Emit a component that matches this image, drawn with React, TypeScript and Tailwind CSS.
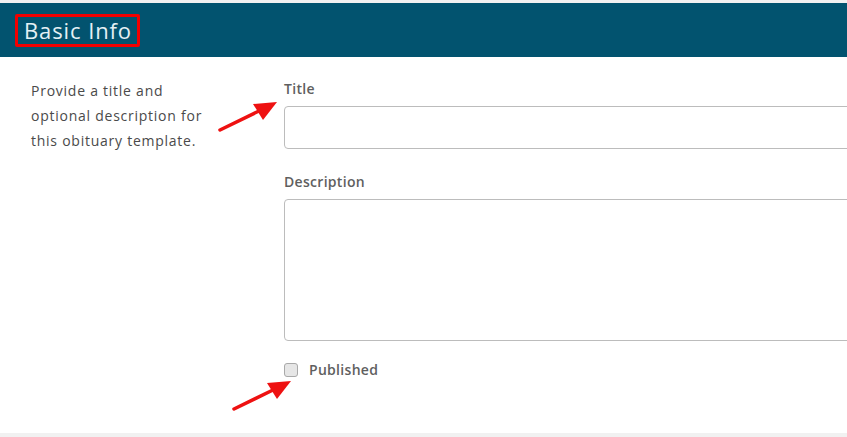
import React from 'react';

// Annotation arrow drawn over the form (screenshot markup)
const Arrow: React.FC<{ className: string }> = ({ className }) => (
  <svg className={className} width="64" height="36" viewBox="0 0 64 36" fill="none">
    <line x1="3" y1="32" x2="44" y2="12" stroke="#ee1111" strokeWidth="3.5" strokeLinecap="round" />
    <polygon points="60,4 36,6 46,22" fill="#ee1111" />
  </svg>
);

const App: React.FC = () => {
  return (
    <div className="w-[847px] h-[437px] overflow-hidden bg-[#f1f1f1] pt-[3px] font-['Open_Sans',sans-serif] relative">
      <div className="bg-white">
        {/* Section header */}
        <div className="h-[54px] bg-[#02536f] flex items-center pl-[15px]">
          <div className="border-[3px] border-[#f20000] rounded-[2px] h-[33px] w-[125px] flex items-center pl-[6px]">
            <h2 className="text-[22px] leading-none text-[#e4f0f5] font-normal tracking-[0.9px]">Basic Info</h2>
          </div>
        </div>

        {/* Body */}
        <div className="flex h-[376px]">
          <p className="w-[284px] shrink-0 pl-[31px] pr-[70px] pt-[21px] text-[14px] leading-[25px] text-[#4a4a4a] tracking-[0.75px]">
            Provide a title and optional description for this obituary template.
          </p>
          <div className="flex-1 pt-[22px] min-w-[600px]">
            <label className="block text-[14px] font-semibold text-[#5f5f5f] leading-[20px] mb-[7px] tracking-[0.3px]">Title</label>
            <input className="block w-[620px] h-[43px] border border-[#bcbcbc] rounded-[4px] bg-white" />

            <label className="block text-[14px] font-semibold text-[#5f5f5f] leading-[20px] mt-[23px] mb-[7px] tracking-[0.3px]">Description</label>
            <textarea className="block w-[620px] h-[142px] border border-[#bcbcbc] rounded-[4px] bg-white resize-none" />

            <div className="flex items-center mt-[19px]">
              <span className="w-[14px] h-[14px] rounded-[3px] border border-[#a9a9a9] bg-[#e6e6e6] inline-block" />
              <span className="ml-[11px] text-[14px] font-semibold text-[#5f5f5f] leading-[20px] tracking-[0.3px]">Published</span>
            </div>
          </div>
        </div>
      </div>

      <Arrow className="absolute left-[217px] top-[98px]" />
      <Arrow className="absolute left-[231px] top-[377px]" />
    </div>
  );
};

export default App;
